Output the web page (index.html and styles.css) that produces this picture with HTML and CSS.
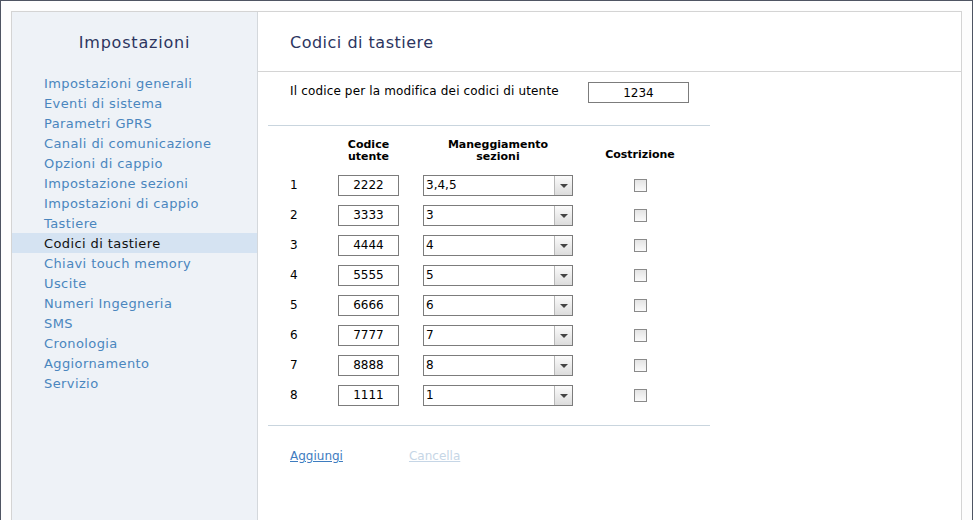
FILE: index.html
```html
<!DOCTYPE html>
<html lang="it">
<head>
<meta charset="utf-8">
<title>Codici di tastiere</title>
<link rel="stylesheet" href="styles.css">
</head>
<body>
<div class="frame">
  <div class="container">
    <aside class="sidebar">
      <h2 class="side-title">Impostazioni</h2>
      <ul class="nav">
        <li><a href="#">Impostazioni generali</a></li>
        <li><a href="#">Eventi di sistema</a></li>
        <li><a href="#">Parametri GPRS</a></li>
        <li><a href="#">Canali di comunicazione</a></li>
        <li><a href="#">Opzioni di cappio</a></li>
        <li><a href="#">Impostazione sezioni</a></li>
        <li><a href="#">Impostazioni di cappio</a></li>
        <li><a href="#">Tastiere</a></li>
        <li class="active"><a href="#">Codici di tastiere</a></li>
        <li><a href="#">Chiavi touch memory</a></li>
        <li><a href="#">Uscite</a></li>
        <li><a href="#">Numeri Ingegneria</a></li>
        <li><a href="#">SMS</a></li>
        <li><a href="#">Cronologia</a></li>
        <li><a href="#">Aggiornamento</a></li>
        <li><a href="#">Servizio</a></li>
      </ul>
    </aside>
    <main class="main">
      <header class="main-header"><h1>Codici di tastiere</h1></header>
      <div class="content">
        <div class="master">
          <span class="master-label">Il codice per la modifica dei codici di utente</span>
          <input class="field master-field" type="text" value="1234">
        </div>
        <div class="table">
          <div class="th"></div>
          <div class="th"><span class="th-text">Codice<br>utente</span></div>
          <div class="th th-wide"><span class="th-text">Maneggiamento<br>sezioni</span></div>
          <div class="th th-check"><span class="th-text">Costrizione</span></div>

          <div class="num">1</div>
          <div class="cell"><input class="field code" type="text" value="2222"></div>
          <div class="cell"><div class="select"><span class="select-val">3,4,5</span><span class="select-btn"></span></div></div>
          <div class="cell check"><span class="box"></span></div>

          <div class="num">2</div>
          <div class="cell"><input class="field code" type="text" value="3333"></div>
          <div class="cell"><div class="select"><span class="select-val">3</span><span class="select-btn"></span></div></div>
          <div class="cell check"><span class="box"></span></div>

          <div class="num">3</div>
          <div class="cell"><input class="field code" type="text" value="4444"></div>
          <div class="cell"><div class="select"><span class="select-val">4</span><span class="select-btn"></span></div></div>
          <div class="cell check"><span class="box"></span></div>

          <div class="num">4</div>
          <div class="cell"><input class="field code" type="text" value="5555"></div>
          <div class="cell"><div class="select"><span class="select-val">5</span><span class="select-btn"></span></div></div>
          <div class="cell check"><span class="box"></span></div>

          <div class="num">5</div>
          <div class="cell"><input class="field code" type="text" value="6666"></div>
          <div class="cell"><div class="select"><span class="select-val">6</span><span class="select-btn"></span></div></div>
          <div class="cell check"><span class="box"></span></div>

          <div class="num">6</div>
          <div class="cell"><input class="field code" type="text" value="7777"></div>
          <div class="cell"><div class="select"><span class="select-val">7</span><span class="select-btn"></span></div></div>
          <div class="cell check"><span class="box"></span></div>

          <div class="num">7</div>
          <div class="cell"><input class="field code" type="text" value="8888"></div>
          <div class="cell"><div class="select"><span class="select-val">8</span><span class="select-btn"></span></div></div>
          <div class="cell check"><span class="box"></span></div>

          <div class="num">8</div>
          <div class="cell"><input class="field code" type="text" value="1111"></div>
          <div class="cell"><div class="select"><span class="select-val">1</span><span class="select-btn"></span></div></div>
          <div class="cell check"><span class="box"></span></div>
        </div>
        <div class="actions">
          <a href="#" class="link">Aggiungi</a>
          <a href="#" class="link disabled">Cancella</a>
        </div>
      </div>
    </main>
  </div>
</div>
</body>
</html>
```

FILE: styles.css
```css
* { box-sizing: border-box; }
html, body { margin: 0; padding: 0; background: #fff; }
body {
  font-family: "DejaVu Sans", Verdana, sans-serif;
  color: #000;
  overflow: hidden;
}
.frame {
  height: 520px;
  overflow: hidden;
  border-top: 1px solid #4e5462;
  border-left: 1px solid #4e5462;
  border-right: 1px solid #4e5462;
  padding: 10px 10px 0 10px;
  background: #fdfdfd;
}
.container {
  display: flex;
  height: 515px;
  border: 1px solid #d4d4d4;
  border-bottom: none;
  background: #fff;
}
.sidebar {
  width: 246px;
  flex: none;
  background: #eef2f7;
  border-right: 1px solid #d4d8dc;
}
.side-title {
  margin: 0;
  padding-top: 20px;
  height: 61px;
  text-align: center;
  font-weight: normal;
  font-size: 16px;
  letter-spacing: 0.8px;
  color: #2c3560;
  line-height: 22px;
}
.nav { list-style: none; margin: 0; padding: 0; }
.nav li { height: 20px; line-height: 20px; padding-left: 32px; }
.nav a {
  color: #4a86be;
  text-decoration: none;
  font-size: 13px;
  letter-spacing: 0.4px;
}
.nav li.active { background: #d5e3f2; }
.nav li.active a { color: #111; }

.main { flex: 1; }
.main-header {
  height: 60px;
  border-bottom: 1px solid #d4d4d4;
  padding: 20px 0 0 32px;
}
.main-header h1 {
  margin: 0;
  font-weight: normal;
  font-size: 16px;
  letter-spacing: 0.5px;
  line-height: 22px;
  color: #2c3560;
}
.content { padding: 0 0 0 10px; width: 452px; }
.master {
  display: flex;
  align-items: flex-start;
  padding: 10px 0 0 22px;
  height: 54px;
  border-bottom: 1px solid #c9d5de;
}
.master-label { font-size: 12px; line-height: 18px; width: 298px; letter-spacing: 0.15px; }
.field {
  font-family: "DejaVu Sans", Verdana, sans-serif;
  font-size: 12px;
  color: #000;
  border: 1px solid #7c7c7c;
  background: #fff;
  text-align: center;
  padding: 0;
  height: 21px;
  outline: none;
}
.master-field { width: 101px; margin-top: 0; }

.table {
  display: grid;
  grid-template-columns: 48px 85px 160px 114px;
  grid-auto-rows: 30px;
  grid-template-rows: 44px;
  padding-left: 22px;
  border-bottom: 1px solid #c9d5de;
  padding-bottom: 15px;
}
.th { display: flex; align-items: flex-start; padding-top: 13px; }
.th-text {
  width: 61px;
  text-align: center;
  font-weight: bold;
  font-size: 11px;
  line-height: 12px;
  white-space: nowrap;
  display: flex;
  justify-content: center;
}
.th-wide .th-text { width: 150px; }
.th-check { justify-content: center; padding-top: 23px; }
.th-check .th-text { width: auto; }
.num { font-size: 12px; line-height: 30px; }
.cell { display: flex; align-items: center; }
.code { width: 61px; height: 21px; }
.select {
  position: relative;
  width: 150px;
  height: 21px;
  border: 1px solid #7c7c7c;
  background: #fff;
  font-size: 12px;
  line-height: 19px;
}
.select-val { padding-left: 2px; }
.select-btn {
  position: absolute;
  top: 0;
  right: 0;
  width: 18px;
  height: 19px;
  border-left: 1px solid #b8b8b8;
  background: linear-gradient(#fbfbfb, #dcdcdc);
}
.select-btn::after {
  content: "";
  position: absolute;
  left: 5px;
  top: 8px;
  border-left: 4px solid transparent;
  border-right: 4px solid transparent;
  border-top: 4px solid #444;
}
.check { justify-content: center; }
.box {
  width: 13px;
  height: 13px;
  border: 1px solid #8a8a8a;
  background: linear-gradient(#e4e4e4, #fafafa);
}
.actions {
  display: flex;
  padding: 23px 0 0 22px;
  gap: 66px;
  font-size: 12px;
}
.link { color: #3e7cbf; text-decoration: underline; }
.link.disabled { color: #c6d6e6; }
```
